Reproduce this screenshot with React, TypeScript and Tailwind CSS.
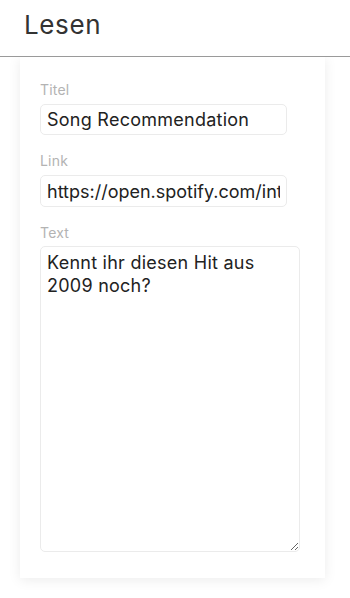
import React from "react";

export default function App() {
  const font = { fontFamily: "Inter, 'Noto Sans', sans-serif" };
  return (
    <div className="w-[350px] h-[598px] bg-white overflow-hidden" style={font}>
      <header className="h-[57px] border-b border-[#9a9a9a] flex items-center px-6 relative z-10 bg-white">
        <h1 className="text-[26px] text-[#333333] font-normal leading-none tracking-[0.6px] -mt-[6px]">Lesen</h1>
      </header>
      <div className="mx-5 w-[305px] h-[521px] bg-white shadow-[0_2px_12px_rgba(0,0,0,0.08)] px-5 pt-[23px]">
        <label className="block text-[14px] leading-5 text-[#b3b3b3] tracking-[0.2px]">Titel</label>
        <input
          readOnly
          defaultValue="Song Recommendation"
          className="mt-1 block w-[247px] h-[31px] border border-[#ebebeb] rounded-[5px] px-[6px] text-[18px] tracking-[0.25px] text-[#222] outline-none"
          style={font}
        />
        <label className="block mt-[16px] text-[14px] leading-5 text-[#b3b3b3] tracking-[0.2px]">Link</label>
        <input
          readOnly
          defaultValue="https://open.spotify.com/intl-de/track/"
          className="mt-1 block w-[247px] h-[32px] border border-[#ebebeb] rounded-[5px] px-[6px] text-[18px] text-[#222] outline-none"
          style={font}
        />
        <label className="block mt-[16px] text-[14px] leading-5 text-[#b3b3b3] tracking-[0.2px]">Text</label>
        <textarea
          readOnly
          defaultValue={"Kennt ihr diesen Hit aus 2009 noch?"}
          className="mt-[3px] block w-[260px] h-[306px] border border-[#ebebeb] rounded-[5px] px-[6px] py-[4px] text-[18px] leading-[23px] tracking-[0.25px] text-[#222] outline-none"
          style={font}
        />
      </div>
    </div>
  );
}
